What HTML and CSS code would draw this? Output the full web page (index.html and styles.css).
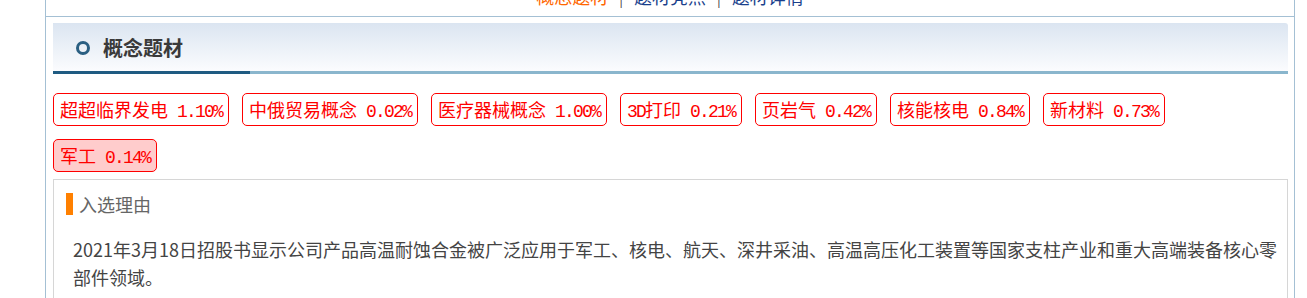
FILE: index.html
```html
<!DOCTYPE html>
<html>
<head>
  <title>概念题材</title>
  <link rel="stylesheet" href="styles.css">
</head>
<body>
  <div class="wrap">
    <div class="nav">
      <a class="on" href="#">概念题材</a><span class="sep">|</span><a href="#">题材亮点</a><span class="sep">|</span><a href="#">题材详情</a>
    </div>
    <div class="content">
      <div class="head">
        <span class="dot"></span>
        <h2>概念题材</h2>
      </div>
      <div class="tags">
        <span class="tag">超超临界发电<span class="pct">1.10%</span></span>
        <span class="tag">中俄贸易概念<span class="pct">0.02%</span></span>
        <span class="tag">医疗器械概念<span class="pct">1.00%</span></span>
        <span class="tag"><span class="lat">3D</span>打印<span class="pct">0.21%</span></span>
        <span class="tag">页岩气<span class="pct">0.42%</span></span>
        <span class="tag">核能核电<span class="pct">0.84%</span></span>
        <span class="tag">新材料<span class="pct">0.73%</span></span>
        <span class="tag active">军工<span class="pct">0.14%</span></span>
      </div>
      <div class="reason">
        <div class="reason-title">入选理由</div>
        <p>2021年3月18日招股书显示公司产品高温耐蚀合金被广泛应用于军工、核电、航天、深井采油、高温高压化工装置等国家支柱产业和重大高端装备核心零部件领域。</p>
      </div>
    </div>
  </div>
</body>
</html>
```
FILE: styles.css
```css
body {
  margin: 0;
  background-color: #fff;
  font-family: "Noto Sans CJK SC", sans-serif;
}

.wrap {
  width: 1248px;
  margin: -15px 0 0 45px;
  border-left: 1px solid #a4c0d4;
  border-right: 1px solid #a4c0d4;
  min-height: 330px;
}

.nav {
  height: 31px;
  line-height: 22px;
  font-size: 18px;
  text-align: center;
  border-bottom: 1px solid #a4c0d4;
}
.nav a {
  color: #1a3f8c;
  text-decoration: none;
}
.nav a.on {
  color: #ff6600;
}
.nav .sep {
  color: #444;
  margin: 0 11px;
  font-size: 14px;
}

.content {
  padding: 6px 6px 0 7px;
}

.head {
  height: 48px;
  display: flex;
  align-items: center;
  background: linear-gradient(#dbe5f1, #fbfcfe);
  border-bottom: 3px solid #8ab6cd;
  border-top-right-radius: 3px;
  position: relative;
}
.head::after {
  content: '';
  position: absolute;
  left: 0;
  bottom: -3px;
  width: 197px;
  height: 3px;
  background-color: #1f5b82;
}
.dot {
  width: 8px;
  height: 8px;
  border: 3px solid #2a5f82;
  border-radius: 50%;
  margin: 2px 13px 0 23px;
}
.head h2 {
  margin: 0;
  font-size: 20px;
  font-weight: bold;
  color: #3a3a3a;
}

.tags {
  display: flex;
  flex-wrap: wrap;
  row-gap: 13px;
  padding-top: 19px;
}
.tag {
  height: 31px;
  line-height: 31px;
  padding: 0 6px;
  margin-right: 13px;
  border: 1px solid #f00;
  border-radius: 5px;
  color: #f00;
  font-size: 18px;
  background-color: #fff;
  white-space: nowrap;
}
.tag.active {
  background-color: #ffcccc;
}
.pct,
.lat {
  font-family: "Liberation Mono", monospace;
  letter-spacing: -1.8px;
}
.pct {
  margin-left: 9px;
}

.reason {
  margin-top: 7px;
  border: 1px solid #d6d6d6;
  padding: 13px 8px 20px 12px;
}
.reason-title {
  border-left: 7px solid #ff8000;
  height: 22px;
  line-height: 22px;
  padding-left: 6px;
  font-size: 18px;
  color: #666;
}
.reason p {
  margin: 20px 0 0 7px;
  font-size: 18px;
  line-height: 28px;
  color: #444;
}
```
